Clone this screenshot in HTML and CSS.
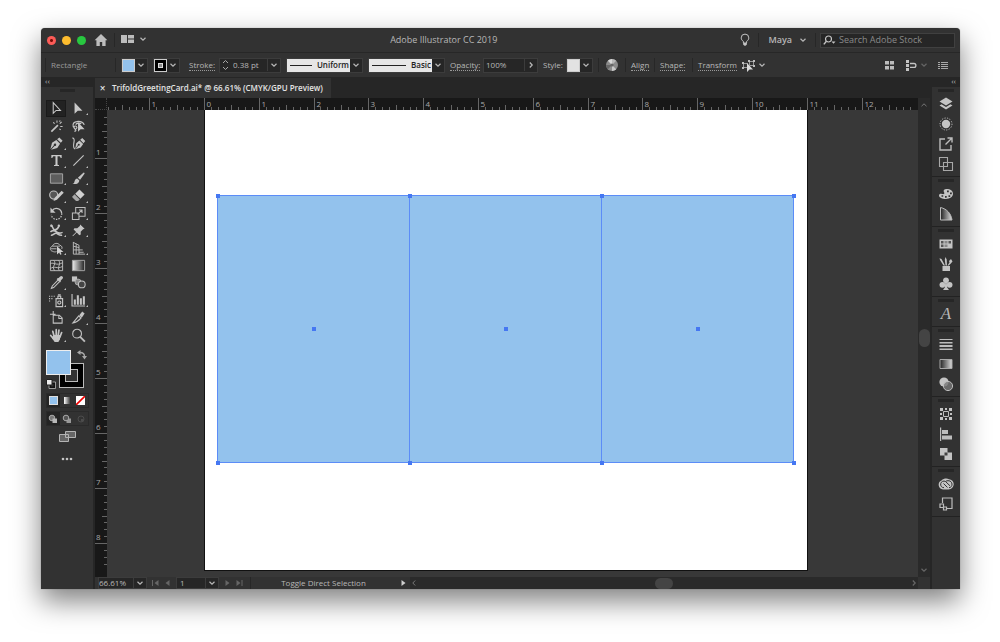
FILE: index.html
```
<!DOCTYPE html>
<html lang="en">
<head>
  <meta charset="UTF-8">
  <meta name="viewport" content="width=device-width, initial-scale=1.0">
  <title>Adobe Illustrator CC 2019</title>
  <link rel="stylesheet" href="styles.css">
</head>
<body>

<svg class="defs" aria-hidden="true">
  <defs>
    <linearGradient id="fade"><stop offset="0" stop-color="#222"/><stop offset="1" stop-color="#ddd"/></linearGradient>
    <linearGradient id="fadeBack"><stop offset="0" stop-color="#eee"/><stop offset="1" stop-color="#222"/></linearGradient>
    <symbol id="down" viewBox="0 0 8 8"><path d="M1.5 2.8 4 5.2 6.5 2.8" fill="none" stroke="currentColor" stroke-width="1.2"/></symbol>
    <symbol id="right" viewBox="0 0 8 8"><path d="M2.8 1.5 5.2 4 2.8 6.5" fill="none" stroke="currentColor" stroke-width="1.2"/></symbol>
  </defs>
</svg>

<main class="window">
  <header class="titlebar">
    <div class="lights">
      <button class="light red" aria-label="Close"></button>
      <button class="light yellow" aria-label="Minimize"></button>
      <button class="light green" aria-label="Zoom"></button>
    </div>
    <button class="home" aria-label="Home">
      <svg width="14" height="14" viewBox="0 0 14 14"><path fill="#bdbdbd" d="M7 1 .6 7.200h1.800V13h3.400V9h2.400v4h3.400V7.200h1.800z"/></svg>
    </button>
    <span class="divider"></span>
    <button class="layouts" aria-label="Arrange documents">
      <svg width="13" height="8" viewBox="0 0 13 8"><path fill="#bdbdbd" d="M0 0h6v8H0zM7 0h6v3.500H7zM7 4.500h6V8H7z"/></svg>
      <svg width="8" height="8"><use href="#down"/></svg>
    </button>
    <h1>Adobe Illustrator CC 2019</h1>
    <button class="tips" aria-label="Learn">
      <svg width="10" height="14" viewBox="0 0 10 14"><path d="M3.400 10V8.400C2 7.500 1.200 6.300 1.200 4.900a3.800 3.800 0 0 1 7.600 0c0 1.400-.8 2.600-2.200 3.500V10z" fill="none" stroke="#c4c4c4"/><path fill="#c4c4c4" d="M3.200 10h3.600v1.700L5 13l-1.800-1.300z"/></svg>
    </button>
    <span class="divider"></span>
    <button class="user">Maya <svg width="8" height="8"><use href="#down"/></svg></button>
    <span class="divider"></span>
    <label class="search">
      <svg width="13" height="11" viewBox="0 0 13 11"><circle cx="5.500" cy="4" r="3" fill="none" stroke="#c4c4c4" stroke-width="1.200"/><path d="M3.400 6.200.8 9.400" stroke="#c4c4c4" stroke-width="1.400"/><path d="M8.500 6.500h4l-2 2.200z" fill="#c4c4c4"/></svg>
      <input type="text" placeholder="Search Adobe Stock" aria-label="Search Adobe Stock">
    </label>
  </header>

  <section class="controls" aria-label="Control panel">
    <span class="divider"></span>
    <span class="kind">Rectangle</span>
    <span class="divider"></span>
    <button class="combo" aria-label="Fill"><span class="chip blue"></span><svg class="chev"><use href="#down"/></svg></button>
    <button class="combo" aria-label="Stroke color"><span class="chip ring"></span><svg class="chev"><use href="#down"/></svg></button>
    <label class="caption stroke" for="weight"><span>Stroke:</span></label>
    <span class="combo weight">
      <svg width="11" height="14" viewBox="0 0 11 14" fill="none" stroke="#a8a8a8"><path d="M3 5l2.500-2.500L8 5M3 9l2.500 2.500L8 9"/></svg>
      <input id="weight" type="text" value="0.38 pt">
      <svg class="chev"><use href="#down"/></svg>
    </span>
    <span class="combo profile">
      <select aria-label="Width profile"><option>Uniform</option></select>
      <svg class="chev"><use href="#down"/></svg>
    </span>
    <span class="combo brush">
      <select aria-label="Brush definition"><option>Basic</option></select>
      <svg class="chev"><use href="#down"/></svg>
    </span>
    <label class="caption opacity" for="opacity"><span>Opacity:</span></label>
    <span class="combo percent"><input id="opacity" type="text" value="100%"><svg class="chev"><use href="#right"/></svg></span>
    <span class="style">Style:</span>
    <button class="combo" aria-label="Graphic style"><span class="chip white"></span><svg class="chev"><use href="#down"/></svg></button>
    <span class="divider"></span>
    <button class="recolor" aria-label="Recolor artwork">
      <svg width="14" height="14" viewBox="0 0 14 14"><circle cx="7" cy="7" r="6" fill="#8b8b8b"/><path fill="#d8d8d8" d="M7 7 2.800 2.800A6 6 0 0 1 7 1z"/><path fill="#b8b8b8" d="M7 7V1a6 6 0 0 1 4.200 1.800z"/><path fill="#666" d="M7 7H1a6 6 0 0 0 1.800 4.200z"/><path fill="#c8c8c8" d="M7 7v6a6 6 0 0 0 4.200-1.800z"/><circle cx="7" cy="7" r="1.600" fill="#666"/></svg>
    </button>
    <span class="divider"></span>
    <button class="caption align"><span>Align</span></button>
    <span class="divider"></span>
    <button class="caption shape"><span>Shape:</span></button>
    <span class="divider"></span>
    <button class="caption transform"><span>Transform</span></button>
    <button class="isolate" aria-label="Isolate object">
      <svg width="13" height="13" viewBox="0 0 13 13"><path d="M1.500 4.500h4v4h-4zM7.500 2.500h4v4h-4z" fill="none" stroke="#999"/><path d="M0 3h2v2H0zM0 8h2v2H0zM6 1h2v2H6zM11 1h2v2h-2zM11 6h2v2h-2z" fill="#bdbdbd"/><path fill="#d8d8d8" d="M5 4v9l2.500-2.500H11z"/></svg>
      <svg width="8" height="8"><use href="#down"/></svg>
    </button>
    <span class="control-end">
      <button aria-label="Snap to grid">
        <svg width="11" height="11" viewBox="0 0 11 11" fill="#bdbdbd"><path d="M1 1h4v3.500H1zM6 1h4v3.500H6zM1 6h4v3.500H1zM6 6h4v3.500H6z"/></svg>
      </button>
      <button aria-label="Snap options">
        <svg width="12" height="11" viewBox="0 0 12 11"><path d="M1 0h3v3H1zM1 4h3v3H1zM1 8h3v3H1z" fill="#c4c4c4"/><path d="M5 3.500h4a1.900 1.900 0 0 1 0 3.800H5" fill="none" stroke="#c4c4c4" stroke-width="1.300"/></svg>
        <svg class="dim" width="8" height="8"><use href="#down"/></svg>
      </button>
      <button aria-label="Panel menu">
        <svg width="10" height="7" viewBox="0 0 10 7" fill="#a8a8a8"><path d="M3 0h7v1H3zM3 2h7v1H3zM3 4h7v1H3zM3 6h7v1H3zM0 0h2v1H0zM0 2h2v1H0zM0 4h2v1H0zM0 6h2v1H0z"/></svg>
      </button>
    </span>
  </section>

  <div class="workspace">
    <aside class="tools" aria-label="Tools">
      <div class="panel-head">‹‹</div>
      <div class="grip"></div>
      <div class="tool-grid">
        <button class="active" aria-label="Selection"><svg viewBox="0 0 16 16"><path d="M4.500 1.800v11.400l3.100-3.100h4.600z" fill="none" stroke="#c8c8c8" stroke-width="1.100"/></svg></button>
        <button class="more" aria-label="Direct selection"><svg viewBox="0 0 16 16"><path fill="#c8c8c8" d="M3.800 1.500v12.200l3.400-3.400h5z"/></svg></button>
        <button aria-label="Magic wand"><svg viewBox="0 0 16 16"><path d="M2.500 13.500 9.500 6.500" stroke="#c4c4c4" stroke-width="1.800"/><path d="M8.500 1.500v2.500M13.500 3l-2 2M12 8h2.500M4.500 3.500l1.500 1.500M11 10.500l1.500 1M12 1.500l-.8 1.300" stroke="#c4c4c4" stroke-width="1.100"/></svg></button>
        <button aria-label="Lasso"><svg viewBox="0 0 16 16"><path d="M4 10C1 8 1.500 3.500 6 2.800c4-.8 8 1 8 3.700M5 10.300c2 0 1.500-3-.5-2.800S3 10 4.500 11 5 13 3.500 13M5 6c1-2 4-2 6-1" fill="none" stroke="#c4c4c4" stroke-width="1.200"/><path fill="#c8c8c8" d="M7.500 3.500v10.200l2.700-2.700h4.300z"/></svg></button>
        <button class="more" aria-label="Pen"><svg viewBox="0 0 16 16"><path fill="#c4c4c4" d="M1.500 14.200 3.200 7.300l4.600-3 4 4-3 4.600-6.600 1.700 3.700-4a1.300 1.300 0 1 0-.7-.7zM8.700 3.400 11 1.500l3.500 3.500-1.900 2.300z"/></svg></button>
        <button aria-label="Curvature"><svg viewBox="0 0 16 16"><path fill="#c4c4c4" d="M4.500 13.800 5.500 7.800l3.500-3 4 3.800-2.700 3.700-5.300 1.900 3-4a1 1 0 1 0-.6-.5zM9.800 4 12 2l3.200 3.200-1.900 2.600z"/><path d="M1.500 2c2.500.5 2 3 1.500 5.500s-1 5 1.500 6.500" fill="none" stroke="#c4c4c4" stroke-width="1.200"/></svg></button>
        <button class="more" aria-label="Type"><svg viewBox="0 0 16 16"><path fill="#c8c8c8" d="M2.500 2h11v3.300h-1.100c-.2-1.400-.7-1.900-1.900-1.900H9.100v8.200c0 .9.400 1.200 1.600 1.300v1H5.300v-1c1.200-.1 1.600-.4 1.600-1.300V3.400H5.500c-1.200 0-1.700.5-1.900 1.900H2.500z"/></svg></button>
        <button class="more" aria-label="Line segment"><svg viewBox="0 0 16 16"><path d="M2.500 13.500l11-11" stroke="#c4c4c4" stroke-width="1.200"/></svg></button>
        <button class="more" aria-label="Rectangle"><svg viewBox="0 0 16 16"><path d="M1.500 3h13v10h-13z" fill="#5d5d5d" stroke="#a8a8a8"/></svg></button>
        <button class="more" aria-label="Paintbrush"><svg viewBox="0 0 16 16"><path fill="#c4c4c4" d="M13.500 1.500c1 0 1.300.8.7 1.700L9.700 9.300 7.300 7.200zM6.600 8l2.300 2c-.2 3-3 4.500-7.400 3.800 1.800-.6 1.900-1.500 2.400-3.200C4.300 9.100 5.400 8.300 6.600 8z"/></svg></button>
        <button class="more" aria-label="Shaper"><svg viewBox="0 0 16 16"><circle cx="5" cy="7.500" r="4.300" fill="#555" stroke="#bdbdbd" stroke-width="1.200"/><path fill="#c8c8c8" d="M13.500 3l2.200 2-7.300 7.500-3.600 1.300 1.300-3.400z"/></svg></button>
        <button class="more" aria-label="Eraser"><svg viewBox="0 0 16 16"><path fill="#d0d0d0" d="M9 1.500l5.500 5.300-4.500 4.700L4.500 6z"/><path fill="#a8a8a8" d="M3.800 6.700l5.500 5.500-1.800 1.600H5.400L1.500 10V9z"/></svg></button>
        <button class="more" aria-label="Rotate"><svg viewBox="0 0 16 16"><path d="M3.200 5.500A5.500 5.500 0 0 1 13.500 8" fill="none" stroke="#c4c4c4" stroke-width="1.400"/><path d="M13.500 8a5.500 5.500 0 1 1-11 1.500" fill="none" stroke="#c4c4c4" stroke-width="1.300" stroke-dasharray="1.500 1.300"/><path fill="#c4c4c4" d="M1.500 1.500v5.700h5.500z"/></svg></button>
        <button class="more" aria-label="Scale"><svg viewBox="0 0 16 16" fill="none" stroke="#bdbdbd" stroke-width="1.100"><path d="M1.500 7.500h7v7h-7zM5 7.500v-6h10v9.500H8.500M7 9l4.500-4.500M8.500 4.200h3.300v3.300"/></svg></button>
        <button class="more" aria-label="Width"><svg viewBox="0 0 16 16"><path d="M2 2.500c2 0 1.500 3.500 3.500 4.500 2.500 1 3.500-.5 5-3.500M1.500 9.500C4 7 6 8 8 9.500s3.500 2 6.500.5M2 13c2.500.5 4-3 6-2s3 2.500 6 2" fill="none" stroke="#c4c4c4" stroke-width="1.700"/><circle cx="2.500" cy="3" r="1.300" fill="#c4c4c4"/><circle cx="10.500" cy="3" r="1.300" fill="#c4c4c4"/></svg></button>
        <button class="more" aria-label="Puppet warp"><svg viewBox="0 0 16 16"><path fill="#c4c4c4" d="M9.800 1.500l4.700 4.700-1.600.4-2.600 2.700.1 3-1.500.7-2.800-2.800-4 4-.6-.6 4-4L2.800 7l.8-1.400 3.100.1 2.700-2.600z"/></svg></button>
        <button class="more" aria-label="Shape builder"><svg viewBox="0 0 16 16"><path d="M4 11C.5 10.500.8 6 3.700 5.500 4.500 2 10 1.500 11.500 4.500c2.500.5 3 3 2 4M4 11c1 .8 3 .8 4 .3M3.700 5.500h8M2 8.300h6" fill="none" stroke="#bdbdbd"/><path fill="#d0d0d0" d="M8.500 5.500v9l2.400-2.300 1 2.500 1.500-.7-1-2.400h3z"/></svg></button>
        <button class="more" aria-label="Perspective grid"><svg viewBox="0 0 16 16" fill="none" stroke="#bdbdbd"><path d="M2.500 1v13h12.500M2.500 1.500l6 3V14M5.500 3V14M2.500 5.500l6 1.500M2.500 9.500h6M8.500 9.500h4M8.500 12h5"/></svg></button>
        <button aria-label="Mesh"><svg viewBox="0 0 16 16" fill="none" stroke="#bdbdbd"><path d="M1.500 2.500h13v11h-13zM1.500 6c4-2 6 3 13-1M1.500 11.500c4-4 7 1 13-2.500M5 2.500c4 4-3 6 1 11M10 2.500c4 4-2 6 1 11"/></svg></button>
        <button aria-label="Gradient"><svg viewBox="0 0 16 16"><path d="M1.500 2.500h13v11h-13z" fill="url(#fadeBack)" stroke="#a8a8a8"/></svg></button>
        <button class="more" aria-label="Eyedropper"><svg viewBox="0 0 16 16"><path d="M9.500 5.500l-6 6.200-1 2.600 2.500-.9 6-6.100" fill="none" stroke="#c4c4c4" stroke-width="1.100"/><path fill="#c4c4c4" d="M9 3.500l1.200-.2 1.700-1.700a1.700 1.700 0 0 1 2.500 2.500l-1.800 1.800-.1 1.300-.9.800L8.200 4.400z"/></svg></button>
        <button aria-label="Blend"><svg viewBox="0 0 16 16"><path fill="#c4c4c4" d="M1 1.500h5.500V7H1z"/><circle cx="7.500" cy="7.500" r="3.200" fill="#888" stroke="#bbb" stroke-width=".8"/><circle cx="11.500" cy="10" r="3.600" fill="#444" stroke="#c4c4c4" stroke-width="1.100"/></svg></button>
        <button class="more" aria-label="Symbol sprayer"><svg viewBox="0 0 16 16" fill="none" stroke="#c4c4c4" stroke-width="1.200"><path d="M7.500 6h7v8.500h-7zM9.500 6V3.500h3V6M9.500 2h3"/><circle cx="11" cy="10.200" r="1.700"/><path d="M0 3.500h7.500M0 6h5M0 8.500h2.500" stroke-dasharray="1.200 1.300"/></svg></button>
        <button class="more" aria-label="Column graph"><svg viewBox="0 0 16 16" fill="#c4c4c4"><path d="M.5 1v13.500H15v-1.200H1.700V1zM3 7h2.200v5.500H3zM6.200 2.500h2.200v10H6.200zM9.400 5.500h2.200v7H9.400zM12.600 3.500h2.200v9h-2.200z"/></svg></button>
        <button aria-label="Artboard"><svg viewBox="0 0 16 16" fill="none" stroke="#c4c4c4" stroke-width="1.100"><path d="M4.500 1v6M1 4.500h6M4.500 5.500h6.500l3 3V14H4.500z"/><path d="M10.500 5.500V9H14"/></svg></button>
        <button class="more" aria-label="Slice"><svg viewBox="0 0 16 16"><path d="M12 1.500l2.500 2.200-3 4.500-2.700-2.500z" fill="#c4c4c4"/><path d="M8.300 6.200 2 13.800c4-.6 6-2.300 8.600-5.200z" fill="none" stroke="#c4c4c4" stroke-width="1.200"/></svg></button>
        <button class="more" aria-label="Hand"><svg viewBox="0 0 16 16"><path fill="none" stroke="#c4c4c4" stroke-width="1.800" stroke-linecap="round" d="M5.500 9 4 3.500M7.700 8V1.800M9.800 8l.8-5.700M11.700 9.500l1.800-4.700M4.500 11 1.800 8"/><path fill="#c4c4c4" d="M4.500 7.500h8l-.8 4.500-1.700 3H6l-2.800-4z"/></svg></button>
        <button aria-label="Zoom"><svg viewBox="0 0 16 16"><circle cx="6.500" cy="6" r="4.700" fill="none" stroke="#bdbdbd" stroke-width="1.200"/><path d="M9.800 9.500l5 5" stroke="#bdbdbd" stroke-width="2"/></svg></button>
      </div>
      <div class="paint">
        <button class="paint-stroke" aria-label="Stroke"></button>
        <button class="paint-fill" aria-label="Fill"></button>
        <button class="swap" aria-label="Swap fill and stroke"><svg width="10" height="10" viewBox="0 0 10 10"><path d="M3 2.500c3 0 4.500 1 4.500 4" fill="none" stroke="#a8a8a8" stroke-width="1.300"/><path d="M0 2.500 3.500 0v5zM7.500 9.500 5 6h5z" fill="#a8a8a8"/></svg></button>
        <button class="reset" aria-label="Default fill and stroke"><svg width="10" height="10" viewBox="0 0 10 10"><path d="M4 4h4.500v4.500H4z" fill="none" stroke="#111" stroke-width="2"/><path d="M3 3h6.500v6.500H3z" fill="none" stroke="#ccc" stroke-width=".7"/><path d="M.5.500H6V6H.500z" fill="#eee" stroke="#222"/></svg></button>
      </div>
      <div class="modes">
        <button class="on" aria-label="Color"><span class="mini blue"></span></button>
        <button aria-label="Gradient"><span class="mini ramp"></span></button>
        <button aria-label="None"><svg width="9" height="9" viewBox="0 0 9 9"><path fill="#fff" d="M0 0h9v9H0z"/><path d="M0 9 9 0" stroke="#e00" stroke-width="1.600"/></svg></button>
      </div>
      <div class="modes">
        <button class="on" aria-label="Draw normal"><svg width="10" height="10" viewBox="0 0 10 10"><circle cx="4" cy="4" r="2.800" fill="#777" stroke="#aaa"/><path fill="#b8b8b8" d="M4.500 4.500H9V9H4.500z"/></svg></button>
        <button aria-label="Draw behind"><svg width="10" height="10" viewBox="0 0 10 10"><path fill="#999" d="M4.500 4.500H9V9H4.500z"/><circle cx="4" cy="4" r="2.800" fill="#555" stroke="#aaa"/></svg></button>
        <button aria-label="Draw inside" disabled><svg width="10" height="10" viewBox="0 0 10 10"><circle cx="5" cy="5" r="3" fill="none" stroke="#4c4c4c"/><path fill="#4c4c4c" d="M5 5h2.500v2.500H5z"/></svg></button>
      </div>
      <button class="screen" aria-label="Change screen mode"><svg width="17" height="13" viewBox="0 0 17 13" fill="#666" stroke="#b4b4b4"><path d="M6.500 1.500h10v6h-10zM.5 4.500h9v7h-9z"/></svg></button>
      <button class="dots" aria-label="Edit toolbar"><svg width="12" height="4" viewBox="0 0 12 4" fill="#c4c4c4"><circle cx="2" cy="2" r="1.300"/><circle cx="6" cy="2" r="1.300"/><circle cx="10" cy="2" r="1.300"/></svg></button>
    </aside>

    <section class="document">
      <div class="tabs">
        <div class="tab"><button aria-label="Close tab">×</button>TrifoldGreetingCard.ai* @ 66.61% (CMYK/GPU Preview)</div>
      </div>
      <div class="corner"></div>
      <svg class="ruler-x" id="rulerX"></svg>
      <svg class="ruler-y" id="rulerY"></svg>
      <div class="canvas">
        <div class="artboard">
          <svg width="602" height="460" viewBox="0 0 602 460">
            <path d="M12.500 85.500h576v267h-576zM204.500 85.500v267M396.500 85.500v267" fill="#93c2ed" stroke="#5b8cf7"/>
            <path d="M11 84h4v4h-4zM203 84h4v4h-4zM395 84h4v4h-4zM587 84h4v4h-4zM11 351h4v4h-4zM203 351h4v4h-4zM395 351h4v4h-4zM587 351h4v4h-4zM107 217h4v4h-4zM299 217h4v4h-4zM491 217h4v4h-4z" fill="#4577f2"/>
          </svg>
        </div>
      </div>
      <div class="scroll-y">
        <svg width="8" height="8" viewBox="0 0 8 8"><path d="M1.500 5.200 4 2.800l2.500 2.400" fill="none" stroke="#777"/></svg>
        <span class="thumb"></span>
        <svg class="dim" width="8" height="8"><use href="#down"/></svg>
      </div>
      <footer class="status">
        <span class="combo zoom"><input type="text" value="66.61%" aria-label="Zoom level"><svg class="chev"><use href="#down"/></svg></span>
        <span class="nav">
          <button aria-label="First artboard"><svg width="7" height="8" viewBox="0 0 7 8"><path d="M0 1h1v6H0zM6.500 1v6L2.500 4z"/></svg></button>
          <button aria-label="Previous artboard"><svg width="7" height="8" viewBox="0 0 7 8"><path d="M5.500 1v6L1.500 4z"/></svg></button>
        </span>
        <span class="combo page"><select aria-label="Artboard"><option>1</option></select><svg class="chev"><use href="#down"/></svg></span>
        <span class="nav">
          <button aria-label="Next artboard"><svg width="7" height="8" viewBox="0 0 7 8"><path d="M1.500 1v6l4-3z"/></svg></button>
          <button aria-label="Last artboard"><svg width="7" height="8" viewBox="0 0 7 8"><path d="M.5 1v6l4-3zM5.500 1h1v6h-1z"/></svg></button>
        </span>
        <span class="message">Toggle Direct Selection</span>
        <button class="play" aria-label="Status options"><svg width="7" height="8" viewBox="0 0 7 8"><path d="M1.500 1v6l4-3z" fill="#d0d0d0"/></svg></button>
        <div class="scroll-x">
          <svg width="8" height="8" viewBox="0 0 8 8"><path d="M5.200 1.500 2.800 4l2.400 2.500" fill="none" stroke="#777"/></svg>
          <span class="thumb"></span>
          <svg class="dim" width="8" height="8"><use href="#right"/></svg>
        </div>
      </footer>
    </section>

    <aside class="dock" aria-label="Panels">
      <div class="panel-head">‹‹</div>
      <div class="dock-group">
        <button aria-label="Layers"><svg viewBox="0 0 16 16" fill="#c4c4c4"><path d="M8 1.500l6.500 4L8 9.500l-6.500-4z"/><path d="M1.500 9.500 3.500 8.300 8 11l4.500-2.700 2 1.200L8 13.500z"/></svg></button>
        <button aria-label="Appearance"><svg viewBox="0 0 16 16"><circle cx="8" cy="8" r="4.200" fill="#c4c4c4"/><circle cx="8" cy="8" r="6" fill="none" stroke="#bdbdbd" stroke-dasharray="1.200 1.400"/></svg></button>
        <button aria-label="Asset export"><svg viewBox="0 0 16 16" fill="none" stroke="#bdbdbd" stroke-width="1.400"><path d="M7 3H2v11h11V9M7.500 8.500l6-6M9.500 2H14v4.500"/></svg></button>
        <button aria-label="Artboards"><svg viewBox="0 0 16 16" fill="#323232" stroke="#a8a8a8" stroke-width="1.100"><path d="M1.500 1.500h8v9h-8zM5.500 6.500h9v8h-9z"/></svg></button>
      </div>
      <div class="dock-group">
        <button aria-label="Color"><svg viewBox="0 0 16 16"><path fill="#c4c4c4" fill-rule="evenodd" d="M8.500 3c4 0 6.500 2 6.500 4.800S12 13 8 13c-3.800 0-7-1.300-7-3.500 0-1.500 1.500-2 3-1.500 1.800.5 3-.3 2-1.800C5 4.500 6 3 8.500 3zM9 4.500v1.800h1.800V4.500zM12 6.500v1.800h1.800V6.500zM10.500 9.300v1.700h1.700V9.300zM7 10v1.700h1.700V10zM3.500 9.300v1.500h1.700V9.300z"/></svg></button>
        <button aria-label="Color guide"><svg viewBox="0 0 16 16"><path d="M2.500 1.500v12.500h11.500C13 7.500 9 3 2.500 1.500z" fill="url(#fade)" stroke="#bdbdbd"/></svg></button>
      </div>
      <div class="dock-group">
        <button aria-label="Swatches"><svg viewBox="0 0 16 16"><path fill="#c4c4c4" d="M1.500 3.500h13v9h-13z"/><path d="M3 5h2.500v2.500H3zM10.500 5H13v2.500h-2.500zM3 8.500h2.500V11H3z" fill="#555"/><path d="M6.500 5h3v2.500h-3zM6.500 8.500h3V11h-3z" fill="#888"/></svg></button>
        <button aria-label="Brushes"><svg viewBox="0 0 16 16" fill="#c4c4c4"><path d="M4.500 10h7.500v5H4.500zM5.500 9.500 2 4l-.5-1.800L3.500 3l3.500 6.500zM7.500 9.500l-.7-6L7.500 1l1.200 2.500.3 6zM9.500 9.500l2-3-.5-1.500 2-2 1.500 2.500-1.700 2-2 2z"/></svg></button>
        <button aria-label="Symbols"><svg viewBox="0 0 16 16" fill="#c4c4c4"><circle cx="8" cy="4.300" r="2.900"/><circle cx="4.400" cy="8.800" r="2.900"/><circle cx="11.600" cy="8.800" r="2.900"/><path d="M7.300 6h1.400l.5 5.500L11 14H5l1.800-2.500z"/></svg></button>
      </div>
      <div class="dock-group">
        <button class="script" aria-label="Glyphs">A</button>
      </div>
      <div class="dock-group">
        <button aria-label="Stroke"><svg viewBox="0 0 16 16" fill="#bdbdbd"><path d="M1.500 3h13v1h-13zM1.500 6h13v1.500h-13zM1.500 9h13v2h-13zM1.500 12.500h13V14h-13z"/></svg></button>
        <button aria-label="Gradient"><svg viewBox="0 0 16 16"><path d="M2 3.500h12v9H2z" fill="url(#fade)" stroke="#a8a8a8"/></svg></button>
        <button aria-label="Transparency"><svg viewBox="0 0 16 16"><circle cx="6" cy="6" r="4.600" fill="#c4c4c4"/><circle cx="10" cy="10" r="4.600" fill="#777" fill-opacity=".8" stroke="#bdbdbd"/></svg></button>
      </div>
      <div class="dock-group">
        <button aria-label="Transform"><svg viewBox="0 0 16 16"><path d="M5.500 5.500h5v5h-5z" fill="none" stroke="#bdbdbd"/><path fill="#c4c4c4" d="M2 2h3v3H2zM11 2h3v3h-3zM2 11h3v3H2zM11 11h3v3h-3zM7 2h2v2H7zM7 12h2v2H7zM2 7h2v2H2zM12 7h2v2h-2z"/></svg></button>
        <button aria-label="Align"><svg viewBox="0 0 16 16" fill="#bdbdbd"><path d="M2 1.500h1.200V15H2zM4 4h6v4H4zM4 9.500h10v4H4z"/></svg></button>
        <button aria-label="Pathfinder"><svg viewBox="0 0 16 16"><path fill="#c4c4c4" d="M2 2h7.500v7.500H2zM6.500 6.500H14V14H6.500z"/><path d="M6.500 6.500h3v3h-3z" fill="#444"/></svg></button>
      </div>
      <div class="dock-group">
        <button aria-label="Libraries"><svg viewBox="0 0 16 16"><path d="M5 13.500A4.700 4.700 0 0 1 3.500 4.500C5.500 2.300 9 2 11 3.200c2.700.2 4.700 2.300 4.700 4.900 0 3-2.200 5.400-5.200 5.400z" fill="#c4c4c4"/><path d="M9.500 11.500 5.500 7.500M6 11.700a3.300 3.300 0 1 1 1.500-6.200l4.500 4.300M7.500 5.500c1.300-1.200 6-1.500 6.500 2.500.2 2-1 3.500-3 3.700" fill="none" stroke="#333"/></svg></button>
        <button aria-label="Links"><svg viewBox="0 0 16 16" fill="none" stroke="#bdbdbd" stroke-width="1.200"><path d="M4.500 7V2H14v10.500H9"/><path d="M2 8h3.500v3.500H2zM5.500 11h3v3h-3z"/></svg></button>
      </div>
    </aside>
  </div>
</main>

<script src="script.js"></script>
</body>
</html>
```

FILE: styles.css
```
* {
  box-sizing: border-box;
}
body {
  font-family: "Open Sans", "Noto Sans", sans-serif;
  font-size: 8px;
  line-height: 12px;
  color: #b8b8b8;
  background: #fff;
  margin: 0;
  min-height: 100vh;
  padding: 28px 40px 53px 41px;
  display: flex;
}
.defs {
  position: absolute;
  width: 0;
  height: 0;
}
button, input, select {
  font: inherit;
  color: inherit;
  background: none;
  border: 0;
  border-radius: 0;
  padding: 0;
  margin: 0;
  min-width: 0;
}
button {
  display: flex;
  align-items: center;
  justify-content: center;
}
select {
  appearance: none;
}
svg {
  flex: none;
}
.window {
  flex: 1;
  min-width: 0;
  display: flex;
  flex-direction: column;
  background: #323232;
  border-radius: 4px 4px 0 0;
  overflow: hidden;
  box-shadow: 0 12px 28px rgba(0, 0, 0, 0.5), 0 0 1px rgba(0, 0, 0, 0.5);
}
.divider {
  width: 1px;
  height: 14px;
  background: #272727;
  flex: none;
}

/* title bar */
.titlebar {
  display: flex;
  align-items: center;
  height: 25px;
  padding: 0 5px 0 6px;
  border-bottom: 1px solid #272727;
}
.lights {
  display: flex;
  gap: 6px;
}
.light {
  width: 9px;
  height: 9px;
  border-radius: 50%;
}
.red {
  background: radial-gradient(#7a0d08 1px, #fc5b57 2px);
}
.yellow {
  background: #fdbc2e;
}
.green {
  background: #28c840;
}
.home {
  margin: 0 6px 0 8px;
}
.layouts {
  gap: 5px;
  margin-left: 6px;
  padding-bottom: 3px;
}
h1 {
  flex: 1;
  margin: 0;
  font-size: 9px;
  font-weight: normal;
  text-align: center;
}
.tips {
  margin-right: 8px;
}
.user {
  gap: 7px;
  margin: 0 8px 0 9px;
  font-size: 9px;
  font-weight: 600;
}
.search {
  display: flex;
  align-items: center;
  gap: 3px;
  width: 135px;
  height: 15px;
  margin-left: 4px;
  padding-left: 2px;
  background: #262626;
  border: 1px solid #404040;
}
.search input {
  flex: 1;
  font-size: 9px;
}
.search input::placeholder {
  color: #8a8a8a;
  opacity: 1;
}

/* control bar */
.controls {
  display: flex;
  align-items: center;
  gap: 5px;
  height: 24px;
  padding: 0 12px 0 4px;
  white-space: nowrap;
}
.kind {
  width: 59px;
  color: #9a9a9a;
}
.combo {
  display: flex;
  align-items: center;
  height: 15px;
  flex: none;
  background: #262626;
  border: 1px solid #3c3c3c;
}
.chev {
  width: 8px;
  height: 8px;
  margin: 0 2px;
}
.chip {
  width: 13px;
  height: 13px;
  border: 1px solid #ccc;
}
.blue {
  background: #93c2ed;
}
.white {
  background: #e2e2e2;
}
.ring {
  background: #888;
  box-shadow: inset 0 0 0 3px #000, inset 0 0 0 4px #ddd;
}
.caption {
  justify-content: flex-start;
  flex: none;
}
.caption span {
  line-height: 10px;
  border-bottom: 1px dotted #999;
}
.stroke {
  width: 29px;
  padding-left: 4px;
}
.weight {
  width: 62px;
}
.weight input {
  width: 37px;
  padding-left: 2px;
  border-right: 1px solid #3c3c3c;
}
.profile, .brush {
  width: 77px;
}
.profile select, .brush select {
  flex: 1;
  height: 13px;
  padding-right: 1px;
  color: #222;
  font-weight: 600;
  text-align-last: right;
  background: linear-gradient(#222, #222) 3px 6px / 22px 1px no-repeat #e6e6e6;
}
.brush select {
  background-size: 34px 1px;
}
.opacity {
  width: 28px;
}
.percent {
  width: 55px;
}
.percent input {
  flex: 1;
  padding-left: 2px;
  border-right: 1px solid #3c3c3c;
}
.style {
  width: 18px;
}
.recolor {
  width: 16px;
}
.align {
  width: 18px;
}
.shape {
  width: 27px;
}
.transform {
  width: 39px;
}
.isolate {
  gap: 3px;
}
.control-end {
  display: flex;
  align-items: center;
  gap: 10px;
  margin-left: auto;
}
.control-end button {
  gap: 3px;
}
.dim {
  color: #666;
}

/* panels */
.workspace {
  flex: 1;
  display: flex;
}
.panel-head {
  height: 10px;
  padding-left: 4px;
  background: #262626;
  line-height: 8px;
}
.tools {
  display: flex;
  flex-direction: column;
  align-items: center;
  width: 53px;
  border-right: 1px solid #262626;
}
.tools .panel-head {
  width: 100%;
}
.grip {
  width: 15px;
  height: 3px;
  margin: 2px 0 8px;
  background: #262626;
}
.tool-grid {
  display: grid;
  grid-template-columns: 22px 22px;
  grid-auto-rows: 1fr;
  width: 44px;
  height: 244px;
}
.tool-grid button {
  position: relative;
  margin: 0 1px;
}
.tool-grid svg {
  width: 15px;
  height: 15px;
}
.tool-grid .active {
  background: #222;
  border: 1px solid #1a1a1a;
}
.more::after {
  content: "";
  position: absolute;
  right: 0;
  bottom: 2px;
  border: 1px solid #bdbdbd;
  border-top-color: transparent;
  border-left-color: transparent;
}
.paint {
  position: relative;
  width: 42px;
  height: 40px;
  margin-top: 6px;
}
.paint button {
  position: absolute;
}
.paint-fill {
  top: 0;
  left: 0;
  width: 25px;
  height: 25px;
  background: #93c2ed;
  border: 1px solid #eee;
}
.paint-stroke {
  top: 13px;
  left: 13px;
  width: 25px;
  height: 25px;
  border: 1px solid #bbb;
  box-shadow: inset 0 0 0 5px #000, inset 0 0 0 6px #bbb;
}
.swap {
  top: 0;
  left: 31px;
}
.reset {
  top: 29px;
  left: 0;
}
.modes {
  display: flex;
  width: 43px;
  height: 15px;
  margin-top: 3px;
  border: 1px solid #2a2a2a;
}
.modes button {
  flex: 1;
}
.modes .on {
  background: #242424;
}
.mini {
  width: 9px;
  height: 9px;
  border: 1px solid #ddd;
}
.ramp {
  background: linear-gradient(90deg, #fff, #222);
  border-color: #333;
}
.screen {
  margin-top: 4px;
}
.dots {
  margin-top: 14px;
}
.dock {
  width: 28px;
}
.dock .panel-head {
  text-align: right;
  padding-right: 4px;
}
.dock-group {
  display: flex;
  flex-direction: column;
  align-items: center;
  padding: 7px 0 2px;
  border-bottom: 1px solid #222;
  background: linear-gradient(#262626, #262626) 6px 2px / 16px 3px no-repeat;
}
.dock-group button {
  height: 20px;
}
.dock-group svg {
  width: 16px;
  height: 16px;
}
.script {
  font-family: "Liberation Serif", serif;
  font-size: 17px;
  font-style: italic;
}

/* document */
.document {
  flex: 1;
  min-width: 0;
  display: grid;
  grid-template-columns: 12px 1fr 12px;
  grid-template-rows: 21px 12px 1fr 12px;
  border: solid #262626;
  border-width: 0 2px 0 1px;
}
.tabs {
  grid-column: 1 / -1;
  background: #262626;
}
.tab {
  display: inline-flex;
  align-items: center;
  gap: 6px;
  height: 20px;
  margin-top: 1px;
  padding: 0 8px 0 4px;
  background: #323232;
  color: #e4e4e4;
  font-weight: 600;
  white-space: nowrap;
}
.tab button {
  width: 7px;
  font-size: 10px;
}
.corner, .ruler-x, .ruler-y {
  background: #181818;
}
.corner {
  border: dotted #444;
  border-width: 0 1px 1px 0;
}
.ruler-x, .ruler-y {
  width: 100%;
  height: 100%;
  min-height: 0;
  overflow: hidden;
}
.ruler-x line, .ruler-y line {
  stroke: #666;
}
.ruler-x text, .ruler-y text {
  fill: #a8a8a8;
  font-size: 8px;
}
.canvas {
  grid-row: 3;
  grid-column: 2;
  min-width: 0;
  overflow: hidden;
  background: #383838;
}
.artboard {
  width: 604px;
  margin-left: 97px;
  border: solid #111;
  border-width: 0 1px 1px;
  background: #fff;
}
.artboard svg {
  display: block;
}
.scroll-y {
  grid-row: 2 / 4;
  grid-column: 3;
  display: flex;
  flex-direction: column;
  align-items: center;
  justify-content: space-between;
  padding: 3px 0;
  background: #2a2a2a;
}
.thumb {
  background: #444;
  border-radius: 6px;
}
.scroll-y .thumb {
  width: 11px;
  height: 18px;
}
.status {
  grid-column: 1 / -1;
  display: flex;
  align-items: center;
  padding: 0 12px 0 3px;
  background: #323232;
}
.status .combo {
  height: 12px;
}
.zoom {
  width: 49px;
}
.zoom input {
  flex: 1;
  border-right: 1px solid #3c3c3c;
}
.nav {
  display: flex;
  gap: 5px;
  width: 29px;
  padding-left: 5px;
  fill: #666;
}
.page {
  width: 43px;
}
.page select {
  flex: 1;
  height: 10px;
  line-height: 10px;
  padding-left: 3px;
  border-right: 1px solid #3c3c3c;
}
.message {
  width: 146px;
  margin-left: 2px;
  border-left: 1px solid #272727;
  text-align: center;
}
.play {
  width: 14px;
}
.scroll-x {
  flex: 1;
  display: flex;
  align-items: center;
  justify-content: space-between;
  height: 12px;
  background: #2a2a2a;
}
.scroll-x .thumb {
  width: 18px;
  height: 11px;
}
```

FILE: script.js
```
const NS = "http://www.w3.org/2000/svg";

function add(svg, name, attrs, text) {
  const el = document.createElementNS(NS, name);
  for (const key in attrs) el.setAttribute(key, attrs[key]);
  if (text !== undefined) el.textContent = text;
  svg.appendChild(el);
}

// unit = pixels per inch at the current zoom, origin = where 0 falls
function drawRuler(svg, origin, unit, first, last, vertical) {
  for (let i = first * 8; i <= last * 8; i++) {
    const pos = Math.round(origin + i * unit / 8) + 0.5;
    const size = i % 8 === 0 ? 12 : i % 4 === 0 ? 5 : 3;
    if (vertical) {
      add(svg, "line", { x1: 12 - size, x2: 12, y1: pos, y2: pos });
      if (size === 12) add(svg, "text", { x: 1, y: pos - 4 }, Math.abs(i / 8));
    } else {
      add(svg, "line", { x1: pos, x2: pos, y1: 12 - size, y2: 12 });
      if (size === 12) add(svg, "text", { x: pos + 2, y: 9 }, Math.abs(i / 8));
    }
  }
}

drawRuler(document.getElementById("rulerX"), 97, 54.8, -1.75, 12.875, false);
drawRuler(document.getElementById("rulerY"), -7, 55, 0.25, 8.375, true);
```
